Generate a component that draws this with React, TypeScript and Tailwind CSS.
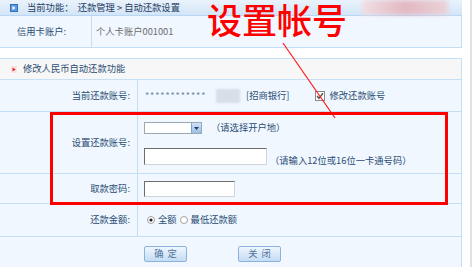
import React from 'react';

const font = { fontFamily: '"Noto Sans CJK SC", "Liberation Sans", sans-serif' };

function HeaderIcon() {
  return (
    <svg width="8" height="8" viewBox="0 0 8 8" className="shrink-0">
      <rect x="0" y="0" width="8" height="8" fill="#2f6fc0" />
      <rect x="1" y="1" width="6" height="6" fill="#5c9be0" />
      <path d="M2.5 2 L5.5 4 L2.5 6 Z" fill="#ffffff" />
    </svg>
  );
}

function SectionIcon() {
  return (
    <svg width="6" height="7" viewBox="0 0 6 7" className="shrink-0">
      <rect x="0" y="0" width="6" height="7" fill="#fbe3e3" />
      <path d="M1.5 1.5 L4.8 3.5 L1.5 5.5 Z" fill="#e0302a" />
    </svg>
  );
}

function Radio({ checked }: { checked?: boolean }) {
  return (
    <svg width="8" height="8" viewBox="0 0 8 8" className="shrink-0">
      <circle cx="4" cy="4" r="3.5" fill="#ffffff" stroke="#8c8c8c" strokeWidth="0.8" />
      {checked && <circle cx="4" cy="4" r="1.6" fill="#222" />}
    </svg>
  );
}

export default function App() {
  return (
    <div className="relative w-[476px] h-[267px] overflow-hidden bg-white text-[9.3px] leading-none" style={font}>
      {/* right window edge */}
      <div className="absolute left-[470px] top-0 w-[2px] h-full bg-[#e2e2e2]" />

      <div className="w-[462px]">
        {/* breadcrumb bar */}
        <div className="h-[16px] flex items-center gap-[9px] pl-[10px] bg-gradient-to-b from-[#eaf3fc] to-[#d2e5f7] border-b border-[#b9d7f2] text-[#1f3c63]">
          <HeaderIcon />
          <span>当前功能：&nbsp;&nbsp;还款管理 &gt; 自动还款设置</span>
        </div>

        {/* card account */}
        <div className="h-[32px] flex bg-[#f0f7ff] border-b border-r border-[#c3def5]">
          <div className="w-[92px] border-r border-[#c3def5] flex items-center pl-[17px] text-[#2a4d74]">信用卡账户:</div>
          <div className="flex-1 flex items-center pl-[4px] text-[#6b6b6b]">个人卡账户001001</div>
        </div>

        <div className="h-[10px]" />

        {/* section title */}
        <div className="h-[22px] flex items-center gap-[6px] pl-[11px] bg-[#f7f7f7] border-y border-r border-[#c6e0f6] text-[#2a4d74]">
          <SectionIcon />
          <span>修改人民币自动还款功能</span>
        </div>

        {/* current account */}
        <div className="h-[32px] flex bg-[#f0f7ff] border-b border-r border-[#c3def5]">
          <div className="w-[138px] border-r border-[#c3def5] flex items-center justify-end pr-[7px] text-[#2a4d74]">当前还款账号:</div>
          <div className="flex-1 flex items-center pl-[7px] text-[#2a4d74]">
            <span className="text-[#6f86a6] text-[9px] tracking-[0.9px] w-[71px] whitespace-nowrap">************</span>
            <span className="w-[24px] h-[14px] bg-[#d6dee7] blur-[1px]" />
            <span className="ml-[6px] text-[#2a4d74]">[招商银行]</span>
            <svg width="10" height="10" viewBox="0 0 10 10" className="ml-[26px] shrink-0">
              <rect x="0.5" y="0.5" width="9" height="9" fill="#ffffff" stroke="#8a8a8a" />
              <path d="M2 5 L4 7.3 L8 2.3" fill="none" stroke="#555" strokeWidth="1.4" />
            </svg>
            <span className="ml-[4px]">修改还款账号</span>
          </div>
        </div>

        {/* new account */}
        <div className="h-[62px] flex bg-[#f0f7ff] border-b border-r border-[#c3def5]">
          <div className="w-[138px] border-r border-[#c3def5] flex items-center justify-end pr-[7px] text-[#2a4d74]">设置还款账号:</div>
          <div className="flex-1 flex flex-col pl-[6px] pt-[10px] text-[#2a4d74]">
            <div className="flex items-center">
              <div className="w-[58px] h-[12px] flex bg-white border border-[#9aa7b4]">
                <div className="flex-1" />
                <div className="w-[10px] h-full bg-gradient-to-b from-[#cfe1f5] to-[#9cc0e6] border-l border-[#7fa4cc] flex items-center justify-center">
                  <svg width="5" height="3" viewBox="0 0 5 3"><path d="M0 0 L5 0 L2.5 3 Z" fill="#1e3d6b" /></svg>
                </div>
              </div>
              <span className="ml-[9px]">（请选择开户地）</span>
            </div>
            <div className="flex items-end mt-[14px]">
              <div className="w-[123px] h-[17px] bg-white border border-[#cfd5dc] border-t-[#6e6e6e] border-l-[#6e6e6e]" />
              <span className="ml-[3px]">（请输入12位或16位一卡通号码）</span>
            </div>
          </div>
        </div>

        {/* password */}
        <div className="h-[30px] flex bg-[#f0f7ff] border-b border-r border-[#c3def5]">
          <div className="w-[138px] border-r border-[#c3def5] flex items-center justify-end pr-[7px] text-[#2a4d74]">取款密码:</div>
          <div className="flex-1 flex items-center pl-[6px]">
            <div className="w-[91px] h-[16px] bg-white border border-[#cfd5dc] border-t-[#6e6e6e] border-l-[#6e6e6e]" />
          </div>
        </div>

        {/* amount */}
        <div className="h-[33px] flex bg-[#f0f7ff] border-b border-r border-[#c3def5]">
          <div className="w-[138px] border-r border-[#c3def5] flex items-center justify-end pr-[7px] text-[#2a4d74]">还款金额:</div>
          <div className="flex-1 flex items-center pl-[9px] text-[#2a4d74]">
            <Radio checked />
            <span className="ml-[3px]">全额</span>
            <span className="ml-[3px]"><Radio /></span>
            <span className="ml-[3px]">最低还款额</span>
          </div>
        </div>

        {/* buttons */}
        <div className="h-[36px] flex items-start pt-[9px] pl-[144px] gap-[51px] bg-[#f0f7ff] border-r border-[#c3def5]">
          <button className="w-[43px] h-[16px] rounded-[2px] border border-[#8db3da] bg-gradient-to-b from-[#eef6fe] to-[#c4dcf4] text-[#50739a] tracking-[4px] pl-[4px]" style={font}>确定</button>
          <button className="w-[43px] h-[16px] rounded-[2px] border border-[#8db3da] bg-gradient-to-b from-[#eef6fe] to-[#c4dcf4] text-[#50739a] tracking-[4px] pl-[4px]" style={font}>关闭</button>
        </div>
      </div>

      {/* blurred redaction in header */}
      <div className="absolute left-[362px] top-0 w-[86px] h-[15px] bg-gradient-to-r from-[#f3dde2] via-[#e3b3bd] to-[#ecd0d6] blur-[2px] opacity-90" />

      {/* annotation */}
      <div className="absolute left-[207px] top-[1px] text-[35px] leading-[36px] font-medium text-[#ff0000]" style={font}>设置帐号</div>
      <svg className="absolute left-0 top-0 pointer-events-none" width="476" height="267">
        <line x1="283" y1="43" x2="335" y2="118" stroke="#ff1a1a" strokeWidth="1.2" />
      </svg>
      <div className="absolute left-[50px] top-[112px] w-[398px] h-[93px] border-[3px] border-[#ff0000]" />
    </div>
  );
}
